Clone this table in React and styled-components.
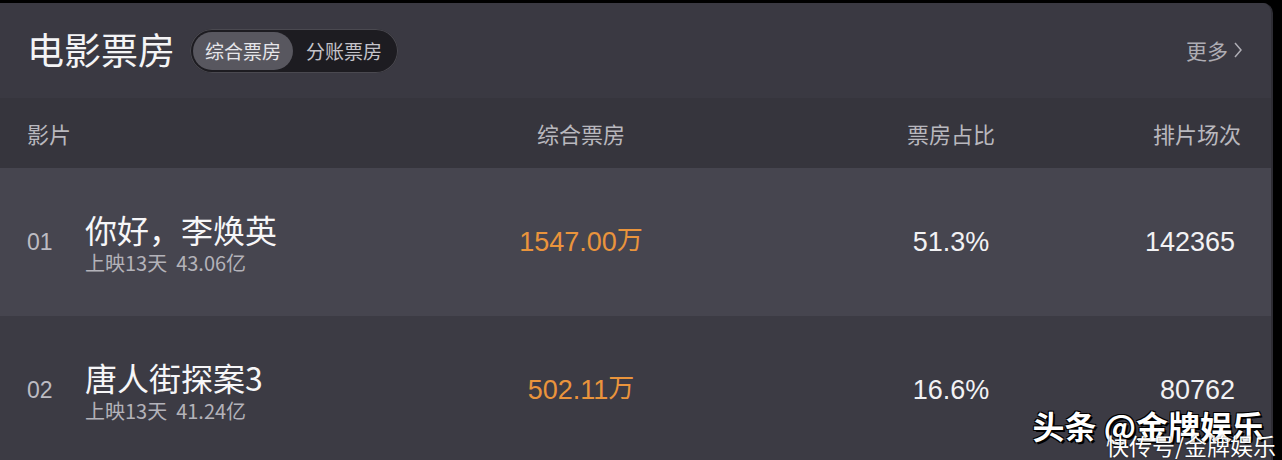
import React from "react";
import styled, { createGlobalStyle } from "styled-components";

const Global = createGlobalStyle`
  html, body { margin: 0; padding: 0; background: #000; }
  body { width: 1282px; height: 460px; overflow: hidden;
    font-family: "Liberation Sans", "Noto Sans CJK SC", sans-serif; }
`;

const cjk = `"Noto Sans CJK SC", "Liberation Sans", sans-serif`;
const num = `"Liberation Sans", "Noto Sans CJK SC", sans-serif`;

const Stage = styled.div`
  position: relative;
  width: 1282px;
  height: 460px;
  padding-top: 3px;
  box-sizing: border-box;
  overflow: hidden;
  background: #000;
`;

const Card = styled.div`
  width: 1273px;
  height: 100%;
  border-top-right-radius: 10px;
  overflow: hidden;
  background: #3c3b44;
  border-right: 2px solid #2e2d34;
  box-sizing: border-box;
`;

const TopBar = styled.div`
  height: 95px;
  display: flex;
  align-items: center;
  padding: 0 28px 0 27px;
  background: #3a3942;
`;

const Title = styled.h1`
  margin: -2px 15px 0 0;
  font-family: ${cjk};
  font-weight: 400;
  font-size: 37px;
  color: #f4f4f6;
  line-height: 1;
`;

const Toggle = styled.div`
  display: flex;
  align-items: center;
  height: 44px;
  padding: 0 3px;
  border-radius: 22px;
  background: #1d1c21;
  box-shadow: inset 0 0 0 1px #4a4950;
  box-sizing: border-box;
`;

const Seg = styled.div`
  height: 38px;
  padding: 0 ${(p) => (p.$active ? "12px" : "13px")};
  display: flex;
  align-items: center;
  border-radius: 19px;
  background: ${(p) => (p.$active ? "#58575f" : "transparent")};
  color: ${(p) => (p.$active ? "#e6e6ea" : "#c4c3c9")};
  font-family: ${cjk};
  font-size: 19px;
`;

const Spacer = styled.div`
  flex: 1;
`;

const More = styled.div`
  display: flex;
  align-items: center;
  gap: 5px;
  color: #aeadb4;
  font-family: ${cjk};
  font-size: 21px;
  margin-top: -2px;
`;

const Grid = styled.div`
  display: grid;
  grid-template-columns: 413px 282px 88px 282px 1fr;
  align-items: center;
  padding: 0 ${(p) => p.$pr}px 0 27px;
  height: ${(p) => p.$h}px;
  background: ${(p) => p.$bg};
  box-sizing: border-box;
`;

const HeadCell = styled.div`
  font-family: ${cjk};
  font-size: 22px;
  color: #b9b8be;
  text-align: ${(p) => p.$align || "left"};
  grid-column: ${(p) => p.$col};
`;

const NameCell = styled.div`
  display: flex;
  align-items: center;
`;

const Rank = styled.div`
  width: 58px;
  font-family: ${num};
  font-size: 23px;
  color: #bdbcc3;
`;

const Movie = styled.div`
  display: flex;
  flex-direction: column;
  margin-top: 2px;
`;

const MovieName = styled.div`
  font-family: ${cjk};
  font-size: 32px;
  color: #f6f6f8;
  line-height: 36px;
`;

const MovieSub = styled.div`
  font-family: ${cjk};
  font-size: 20px;
  color: #b3b2b9;
  line-height: 24px;
  margin-top: 4px;
  white-space: pre;
`;

const Value = styled.div`
  grid-column: ${(p) => p.$col};
  font-family: ${num};
  font-size: 27px;
  line-height: 32px;
  color: ${(p) => p.$color || "#f2f2f4"};
  text-align: ${(p) => p.$align || "center"};
`;

const Wan = styled.span`
  font-family: ${cjk};
  font-size: 26px;
  line-height: 1;
  position: relative;
  top: -2px;
`;

const Watermark = styled.div`
  position: absolute;
  right: 8px;
  bottom: 4px;
  display: flex;
  flex-direction: column;
  align-items: flex-end;
  pointer-events: none;
`;

const WmMain = styled.div`
  font-family: ${cjk};
  font-size: 32px;
  font-weight: 700;
  color: #ffffff;
  line-height: 34px;
  margin-right: 10px;
  text-shadow: 2px 2px 0 #000, -1px -1px 0 #000, 1px -1px 0 #000, -1px 1px 0 #000;
  white-space: pre;
`;

const WmSub = styled.div`
  font-family: ${cjk};
  font-size: 23px;
  color: #ffffff;
  line-height: 22px;
  margin-top: -8px;
  margin-right: -2px;
  text-shadow: 0 0 2px rgba(0, 0, 0, 0.6);
`;

const rows = [
  { rank: "01", name: "你好，李焕英", sub: "上映13天  43.06亿", amt: "1547.00", pct: "51.3%", cnt: "142365", bg: "#46454f" },
  { rank: "02", name: "唐人街探案3", sub: "上映13天  41.24亿", amt: "502.11", pct: "16.6%", cnt: "80762", bg: "#3c3b44" },
];

export default function App() {
  return (
    <Stage>
      <Global />
      <Card>
        <TopBar>
          <Title>电影票房</Title>
          <Toggle>
            <Seg $active>综合票房</Seg>
            <Seg>分账票房</Seg>
          </Toggle>
          <Spacer />
          <More>
            更多
            <svg width="10" height="18" viewBox="0 0 10 18">
              <path d="M2 2 L8 9 L2 16" fill="none" stroke="#aeadb4" strokeWidth="1.5" />
            </svg>
          </More>
        </TopBar>
        <Grid $h={70} $bg="#36353d" $pr={30}>
          <HeadCell $col="1">影片</HeadCell>
          <HeadCell $col="2" $align="center">综合票房</HeadCell>
          <HeadCell $col="4" $align="center">票房占比</HeadCell>
          <HeadCell $col="5" $align="right">排片场次</HeadCell>
        </Grid>
        {rows.map((r) => (
          <Grid key={r.rank} $h={148} $bg={r.bg} $pr={36}>
            <NameCell>
              <Rank>{r.rank}</Rank>
              <Movie>
                <MovieName>{r.name}</MovieName>
                <MovieSub>{r.sub}</MovieSub>
              </Movie>
            </NameCell>
            <Value $col="2" $color="#ea943c">
              {r.amt}
              <Wan>万</Wan>
            </Value>
            <Value $col="4">{r.pct}</Value>
            <Value $col="5" $align="right">{r.cnt}</Value>
          </Grid>
        ))}
      </Card>
      <Watermark>
        <WmMain>头条 @金牌娱乐</WmMain>
        <WmSub>快传号/金牌娱乐</WmSub>
      </Watermark>
    </Stage>
  );
}
